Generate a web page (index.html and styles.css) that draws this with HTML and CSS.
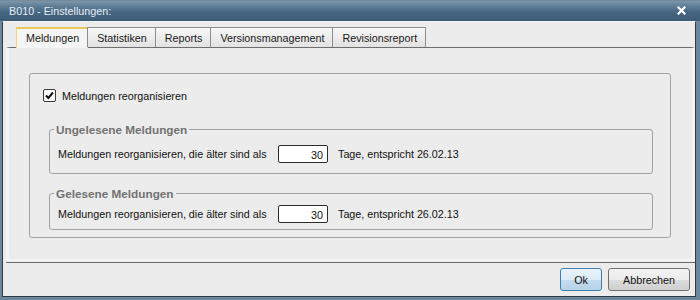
FILE: index.html
```html
<!DOCTYPE html>
<html>
<head>
    <meta charset="utf-8">
    <link rel="stylesheet" href="styles.css">
</head>
<body>
    <div class="window">
        <div class="titlebar">
            <span class="title">B010 - Einstellungen:</span>
            <span class="close">
                <svg width="9" height="9" viewBox="0 0 9 9"><path d="M1.5 1.5 L7.5 7.5 M7.5 1.5 L1.5 7.5" stroke="#fff" stroke-width="2.2" stroke-linecap="square"/></svg>
            </span>
        </div>
        <div class="frame">
            <div class="tabs">
                <div class="tab active">Meldungen</div>
                <div class="tab">Statistiken</div>
                <div class="tab">Reports</div>
                <div class="tab">Versionsmanagement</div>
                <div class="tab">Revisionsreport</div>
            </div>
            <div class="panel">
                <div class="box">
                    <div class="check">
                        <span class="checkbox">
                            <svg width="11" height="11" viewBox="0 0 11 11"><path d="M2 5.5 L4.3 8 L9 2.5" fill="none" stroke="#111" stroke-width="2"/></svg>
                        </span>
                        <span>Meldungen reorganisieren</span>
                    </div>
                    <fieldset class="group unread">
                        <legend>Ungelesene Meldungen</legend>
                        <div class="row">
                            <span class="label">Meldungen reorganisieren, die älter sind als</span>
                            <span class="input">30</span>
                            <span class="hint">Tage, entspricht 26.02.13</span>
                        </div>
                    </fieldset>
                    <fieldset class="group read">
                        <legend>Gelesene Meldungen</legend>
                        <div class="row">
                            <span class="label">Meldungen reorganisieren, die älter sind als</span>
                            <span class="input">30</span>
                            <span class="hint">Tage, entspricht 26.02.13</span>
                        </div>
                    </fieldset>
                </div>
            </div>
            <div class="separator"></div>
            <div class="footer">
                <button class="btn default">Ok</button>
                <button class="btn">Abbrechen</button>
            </div>
        </div>
    </div>
</body>
</html>
```

FILE: styles.css
```css
body{
    margin:0;
    font-family:"Liberation Sans", Arial, sans-serif;
    font-size:10.75px;
    color:#111;
}
.window{
    width:700px;
    height:300px;
    box-sizing:border-box;
    background:#6b879d;
    padding-bottom:3px;
    display:flex;
    flex-direction:column;
}
.titlebar{
    height:21px;
    flex:none;
    display:flex;
    align-items:center;
    justify-content:space-between;
    padding:0 14px 0 9px;
    background:linear-gradient(#6f818d 0, #7c96aa 1px, #5b7a93 7px, #44647f 13px, #3c5c77 21px);
    color:#e6edf3;
}
.close{
    display:flex;
}
.frame{
    flex:1;
    margin:0 4px 0 2px;
    background:#ececec;
    border:1px solid #2c3b47;
    border-top:1px solid #f4f4f4;
    display:flex;
    flex-direction:column;
}
.tabs{
    display:flex;
    margin:5px 0 0 13px;
    height:20px;
    position:relative;
    z-index:1;
}
.tab{
    height:20px;
    box-sizing:border-box;
    padding:4px 8px 0 9px;
    border:1px solid #8d8d8d;
    border-bottom:none;
    margin-left:-1px;
    background:linear-gradient(#f7f7f7, #e2e2e2);
    color:#1a1a1a;
}
.tab.active{
    margin-left:0;
    height:21px;
    padding-top:3px;
    border:1px solid #f0d27e;
    border-top:2px solid #efc659;
    border-bottom:none;
    background:#f5f5f5;
}
.panel{
    margin-left:3px;
    height:214px;
    box-sizing:border-box;
    border-top:1px solid #6e6e6e;
    border-left:3px solid #f3f3f3;
    border-right:3px solid #f3f3f3;
    border-bottom:2px solid #f3f3f3;
    background:#ececec;
}
.box{
    margin:25px 0 0 20px;
    width:642px;
    height:165px;
    box-sizing:border-box;
    border:1px solid #a2a2a2;
    border-radius:3px;
    padding:15px 0 0 13px;
}
.check{
    display:flex;
    align-items:center;
    height:13px;
}
.checkbox{
    width:13px;
    height:13px;
    box-sizing:border-box;
    border:1px solid #3a3a3a;
    border-radius:2px;
    background:#fff;
    display:flex;
    align-items:center;
    justify-content:center;
    margin-right:6px;
}
.group{
    margin:0 17px 0 6px;
    border:1px solid #a2a2a2;
    border-radius:3px;
    padding:0 8px;
}
.group legend{
    margin-left:-4px;
    padding:0 2px;
    line-height:13px;
    font-size:11.75px;
    font-weight:bold;
    color:#727272;
}
.unread{
    margin-top:21px;
    padding-top:9px;
    padding-bottom:10px;
}
.read{
    margin-top:13px;
    padding-top:5px;
    padding-bottom:6px;
}
.row{
    display:flex;
    align-items:center;
    height:18px;
}
.label{
    width:220px;
}
.input{
    width:50px;
    height:18px;
    box-sizing:border-box;
    border:1px solid #2b2b2b;
    border-radius:2px;
    background:#fff;
    text-align:right;
    padding:3px 4px 0 0;
}
.hint{
    margin-left:10px;
}
.separator{
    margin:1px 0 0 3px;
    height:1px;
    background:#6a6a6a;
}
.footer{
    flex:1;
    display:flex;
    justify-content:flex-end;
    align-items:flex-start;
    padding:5px 5px 0 0;
    gap:6px;
}
.btn{
    height:23px;
    font-family:"Liberation Sans", Arial, sans-serif;
    font-size:10.75px;
    color:#111;
    border:1px solid #707070;
    border-radius:3px;
    background:linear-gradient(#f3f3f3 0, #ebebeb 50%, #dddddd 51%, #cfcfcf 100%);
    padding:0;
    width:82px;
}
.btn.default{
    width:42px;
    border-color:#3c7fb1;
    background:linear-gradient(#eaf4fb 0, #dcebf6 50%, #c6dcee 51%, #b7d2e8 100%);
}
```
